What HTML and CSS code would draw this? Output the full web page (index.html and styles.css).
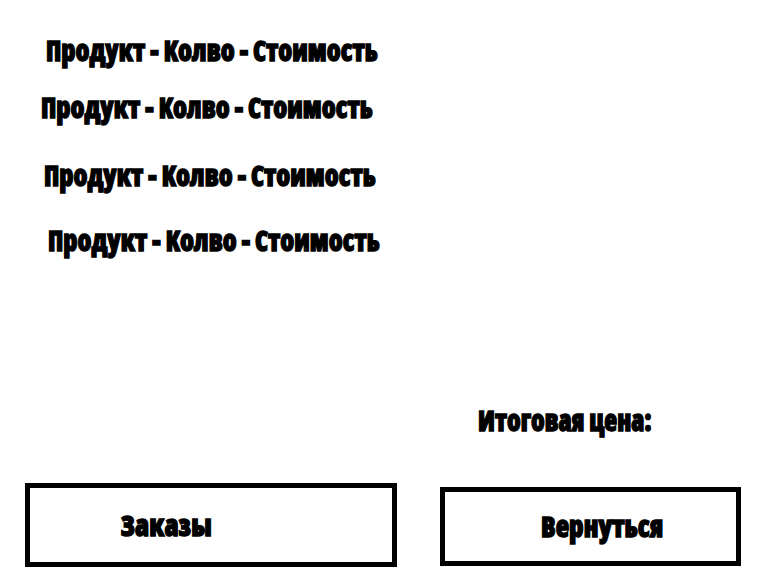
FILE: index.html
```html
<!DOCTYPE html>
<html lang="ru">
<head>
<meta charset="utf-8">
<title>Заказ</title>
<link rel="stylesheet" href="styles.css">
</head>
<body>
<main class="page">
<ul class="items">
<li class="item item-1"><span class="label"><span class="word">Продукт</span> - <span class="word">Колво</span> - <span class="word">Стоимость</span></span></li>
<li class="item item-2"><span class="label"><span class="word">Продукт</span> - <span class="word">Колво</span> - <span class="word">Стоимость</span></span></li>
<li class="item item-3"><span class="label"><span class="word">Продукт</span> - <span class="word">Колво</span> - <span class="word">Стоимость</span></span></li>
<li class="item item-4"><span class="label"><span class="word">Продукт</span> - <span class="word">Колво</span> - <span class="word">Стоимость</span></span></li>
</ul>
<p class="total"><span class="label label-total"><span class="word">Итоговая</span> цена:</span></p>
<div class="actions">
<button class="btn btn-orders"><span class="label label-orders"><span class="word">Заказы</span></span></button>
<button class="btn btn-back"><span class="label label-back"><span class="word">Вернуться</span></span></button>
</div>
</main>
</body>
</html>
```
FILE: styles.css
```css
* { box-sizing: border-box; margin: 0; padding: 0; }
body { background: #fff; color: #000; font-family: "Open Sans", sans-serif; }
.page { width: 769px; height: 579px; overflow: hidden; display: flex; flex-direction: column; }
.items { list-style: none; padding-top: 34px; height: 404px; }
.item { height: 34px; }
.item-1 { margin-left: 46px; }
.item-2 { margin: 23px 0 0 41px; }
.item-3 { margin: 34px 0 0 44px; }
.item-4 { margin: 31px 0 0 48px; }
.label { display: inline-block; font-size: 30.5px; line-height: 34px; height: 34px; font-weight: 800; font-stretch: 75%; white-space: nowrap; transform-origin: 0 50%; transform: translateY(-2px) scaleX(.888); -webkit-text-stroke: 1.4px #000; }
.word { display: inline-block; line-height: 34px; }
.word::first-letter { font-size: 29px; }
.total { height: 79px; padding-left: 478px; }
.label-total { transform: translateY(-2px) scaleX(.871); }
.actions { display: flex; gap: 43px; padding-left: 25px; align-items: flex-start; }
.btn { border: 5px solid #000; background: #fff; color: #000; text-align: left; font-family: inherit; }
.btn-orders { width: 372px; height: 84px; padding-left: 91px; }
.label-orders { transform: translateY(-1px) scaleX(.938); }
.btn-back { width: 301px; height: 79px; margin-top: 4px; padding-left: 96px; }
.label-back { transform: translateY(-2px) scaleX(.91); }
```
